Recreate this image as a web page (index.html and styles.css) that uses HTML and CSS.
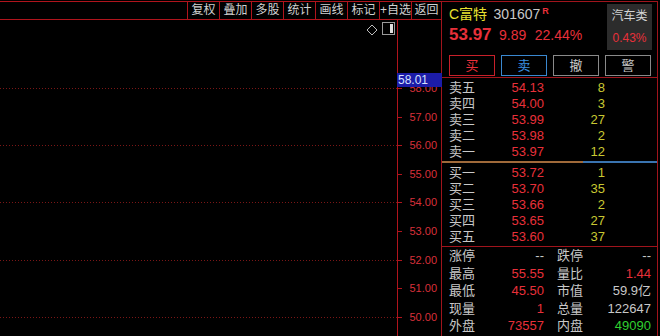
FILE: index.html
```html
<!DOCTYPE html>
<html lang="zh-CN">
<head>
    <meta charset="UTF-8">
    <title>C富特 301607</title>
    <link rel="stylesheet" href="styles.css">
</head>
<body>
    <div class="main">
        <div class="toolbar">
            <div class="tool">复权</div>
            <div class="tool">叠加</div>
            <div class="tool">多股</div>
            <div class="tool">统计</div>
            <div class="tool">画线</div>
            <div class="tool">标记</div>
            <div class="tool">+自选</div>
            <div class="tool last">返回</div>
        </div>
        <div class="chart">
            <div class="plot">
                <!-- grid lines at even prices -->
                <div class="grid-line" style="top: 68px"></div>
                <div class="grid-line" style="top: 125px"></div>
                <div class="grid-line" style="top: 182px"></div>
                <div class="grid-line" style="top: 240px"></div>
                <div class="grid-line" style="top: 297px"></div>
                <svg class="icon-diamond" width="12" height="12" viewBox="0 0 12 12">
                    <path d="M6 1 L11 6 L6 11 L1 6 Z" fill="none" stroke="#bdbdbd" stroke-width="1"/>
                </svg>
                <svg class="icon-panel" width="14" height="14" viewBox="0 0 14 14">
                    <rect x="0.5" y="0.5" width="12" height="12" fill="none" stroke="#9a9a9a" stroke-width="1"/>
                    <rect x="8" y="2" width="3" height="9" fill="#e0e0e0"/>
                </svg>
            </div>
            <div class="axis">
                <div class="tick" style="top: 68px"></div>
                <div class="tick" style="top: 97px"></div>
                <div class="tick" style="top: 125px"></div>
                <div class="tick" style="top: 154px"></div>
                <div class="tick" style="top: 182px"></div>
                <div class="tick" style="top: 211px"></div>
                <div class="tick" style="top: 240px"></div>
                <div class="tick" style="top: 268px"></div>
                <div class="tick" style="top: 297px"></div>
                <div class="price-label" style="top: 62px">58.00</div>
                <div class="price-label" style="top: 91px">57.00</div>
                <div class="price-label" style="top: 119px">56.00</div>
                <div class="price-label" style="top: 148px">55.00</div>
                <div class="price-label" style="top: 176px">54.00</div>
                <div class="price-label" style="top: 205px">53.00</div>
                <div class="price-label" style="top: 234px">52.00</div>
                <div class="price-label" style="top: 262px">51.00</div>
                <div class="price-label" style="top: 291px">50.00</div>
                <div class="current-price">58.01</div>
            </div>
        </div>
    </div>

    <div class="panel">
        <div class="quote">
            <div class="quote-top">
                <div class="quote-info">
                    <div class="name-line">
                        <span class="stock-name">C富特</span>
                        <span class="stock-code">301607</span><sup class="flag">R</sup>
                    </div>
                    <div class="price-line">
                        <span class="last-price">53.97</span>
                        <span class="change">9.89</span>
                        <span class="change">22.44%</span>
                    </div>
                </div>
                <div class="sector">
                    <div class="sector-name">汽车类</div>
                    <div class="sector-change">0.43%</div>
                </div>
            </div>
            <div class="quote-btns">
                <div class="btn btn-buy">买</div>
                <div class="btn btn-sell">卖</div>
                <div class="btn">撤</div>
                <div class="btn">警</div>
            </div>
        </div>

        <div class="book">
            <div class="book-rows">
                <div class="book-row"><span class="lbl">卖五</span><span class="up">54.13</span><span class="vol">8</span></div>
                <div class="book-row"><span class="lbl">卖四</span><span class="up">54.00</span><span class="vol">3</span></div>
                <div class="book-row"><span class="lbl">卖三</span><span class="up">53.99</span><span class="vol">27</span></div>
                <div class="book-row"><span class="lbl">卖二</span><span class="up">53.98</span><span class="vol">2</span></div>
                <div class="book-row"><span class="lbl">卖一</span><span class="up">53.97</span><span class="vol">12</span></div>
            </div>
            <div class="ratio-bar">
                <div class="ratio-buy"></div>
                <div class="ratio-sell"></div>
            </div>
            <div class="book-rows">
                <div class="book-row"><span class="lbl">买一</span><span class="up">53.72</span><span class="vol">1</span></div>
                <div class="book-row"><span class="lbl">买二</span><span class="up">53.70</span><span class="vol">35</span></div>
                <div class="book-row"><span class="lbl">买三</span><span class="up">53.66</span><span class="vol">2</span></div>
                <div class="book-row"><span class="lbl">买四</span><span class="up">53.65</span><span class="vol">27</span></div>
                <div class="book-row"><span class="lbl">买五</span><span class="up">53.60</span><span class="vol">37</span></div>
            </div>
        </div>

        <div class="stats">
            <span class="lbl">涨停</span><span class="val">--</span><span class="lbl lbl2">跌停</span><span class="val">--</span>
            <span class="lbl">最高</span><span class="val up">55.55</span><span class="lbl lbl2">量比</span><span class="val up">1.44</span>
            <span class="lbl">最低</span><span class="val up">45.50</span><span class="lbl lbl2">市值</span><span class="val">59.9亿</span>
            <span class="lbl">现量</span><span class="val up">1</span><span class="lbl lbl2">总量</span><span class="val">122647</span>
            <span class="lbl">外盘</span><span class="val up">73557</span><span class="lbl lbl2">内盘</span><span class="val down">49090</span>
        </div>
    </div>
</body>
</html>
```

FILE: styles.css
```css
body {
    margin: 0;
    width: 660px;
    height: 336px;
    overflow: hidden;
    background-color: #000;
    color: #c8c8c8;
    font-family: "Liberation Sans", "Noto Sans CJK SC", sans-serif;
    display: flex;
}
.main {
    width: 441px;
    display: flex;
    flex-direction: column;
}
.toolbar {
    margin-top: 1px;
    height: 17px;
    border-top: 1px solid #b0141c;
    border-bottom: 1px solid #b0141c;
    display: flex;
    justify-content: flex-end;
}
.tool {
    width: 31px;
    border-left: 1px solid #b0141c;
    font-size: 12px;
    line-height: 17px;
    text-align: center;
    color: #d0d0d0;
    white-space: nowrap;
}
.tool.last {
    width: 29px;
}
.chart {
    flex: 1;
    display: flex;
}
.plot {
    width: 397px;
    position: relative;
}
.grid-line {
    position: absolute;
    left: 0;
    right: 0;
    height: 1px;
    background-image: repeating-linear-gradient(90deg, #7a1616 0 1px, transparent 1px 3px);
}
.icon-diamond {
    position: absolute;
    left: 366px;
    top: 4px;
}
.icon-panel {
    position: absolute;
    left: 382px;
    top: 2px;
}
.axis {
    width: 43px;
    border-left: 1px solid #b0141c;
    position: relative;
}
.tick {
    position: absolute;
    left: 0;
    width: 4px;
    height: 1px;
    background-color: #b0141c;
}
.price-label {
    position: absolute;
    right: 4px;
    font-size: 11px;
    line-height: 13px;
    color: #d8303a;
}
.current-price {
    position: absolute;
    left: -1px;
    top: 53px;
    width: 45px;
    height: 14px;
    background-color: #1c1ca8;
    color: #d6e0ff;
    font-size: 12px;
    line-height: 14px;
    padding-left: 1px;
    box-sizing: border-box;
}

/* right panel */
.panel {
    width: 215px;
    margin-top: 1px;
    border: 1px solid #a0141c;
    border-bottom: none;
    display: flex;
    flex-direction: column;
}
.quote {
    height: 75px;
    border-bottom: 1px solid #a0141c;
    padding: 0 5px 0 7px;
}
.quote-top {
    height: 51px;
    display: flex;
    justify-content: space-between;
}
.quote-info {
    padding-top: 2px;
}
.name-line {
    height: 20px;
    line-height: 20px;
    white-space: nowrap;
}
.stock-name {
    color: #e8e030;
    font-size: 14px;
}
.stock-code {
    color: #c8c8c8;
    font-size: 14px;
    margin-left: 2px;
}
.flag {
    color: #e8303a;
    font-size: 9px;
    font-weight: bold;
    vertical-align: 5px;
    line-height: 9px;
    margin-left: 2px;
}
.price-line {
    height: 22px;
    line-height: 22px;
    color: #e8303a;
    white-space: nowrap;
}
.last-price {
    font-size: 17px;
    font-weight: bold;
    margin-right: 3px;
}
.change {
    font-size: 14px;
    margin-right: 4px;
}
.sector {
    width: 45px;
    height: 46px;
    margin-top: 2px;
    background-color: #2c2c2c;
    text-align: center;
    font-size: 12px;
}
.sector-name {
    color: #d4d4d4;
    line-height: 22px;
    padding-top: 1px;
}
.sector-change {
    color: #e8303a;
    line-height: 22px;
}
.quote-btns {
    margin-top: 2px;
    display: flex;
    gap: 6px;
}
.btn {
    width: 44px;
    height: 19px;
    border: 1px solid #8a8a8a;
    text-align: center;
    font-size: 13px;
    line-height: 19px;
    color: #c8c8c8;
}
.btn-buy {
    border-color: #c8202a;
    color: #e8303a;
}
.btn-sell {
    border-color: #3a88d0;
    color: #3a90e0;
}
.book {
    padding-top: 2px;
    border-bottom: 1px solid #a0141c;
    padding-bottom: 1px;
}
.book-row {
    display: grid;
    grid-template-columns: 41px 54px 61px;
    padding-left: 7px;
    height: 16px;
    line-height: 16px;
    font-size: 13px;
}
.book-row span:nth-child(2),
.book-row span:nth-child(3) {
    text-align: right;
}
.ratio-bar {
    display: flex;
    height: 2px;
    margin: 1px 0 2px;
}
.ratio-buy {
    width: 141px;
    background-color: #a06a3a;
}
.ratio-sell {
    flex: 1;
    background-color: #3a74b0;
}
.lbl {
    color: #c8c8c8;
}
.up {
    color: #e8303a;
}
.down {
    color: #30d030;
}
.vol {
    color: #c8c832;
}
.stats {
    display: grid;
    grid-template-columns: 41px 54px 53px 54px;
    grid-auto-rows: 17.6px;
    padding-left: 7px;
    font-size: 13px;
    line-height: 17.6px;
}
.stats .val {
    text-align: right;
}
.stats .val:not(.up):not(.down) {
    color: #c8c8c8;
}
.lbl2 {
    padding-left: 13px;
}
```
